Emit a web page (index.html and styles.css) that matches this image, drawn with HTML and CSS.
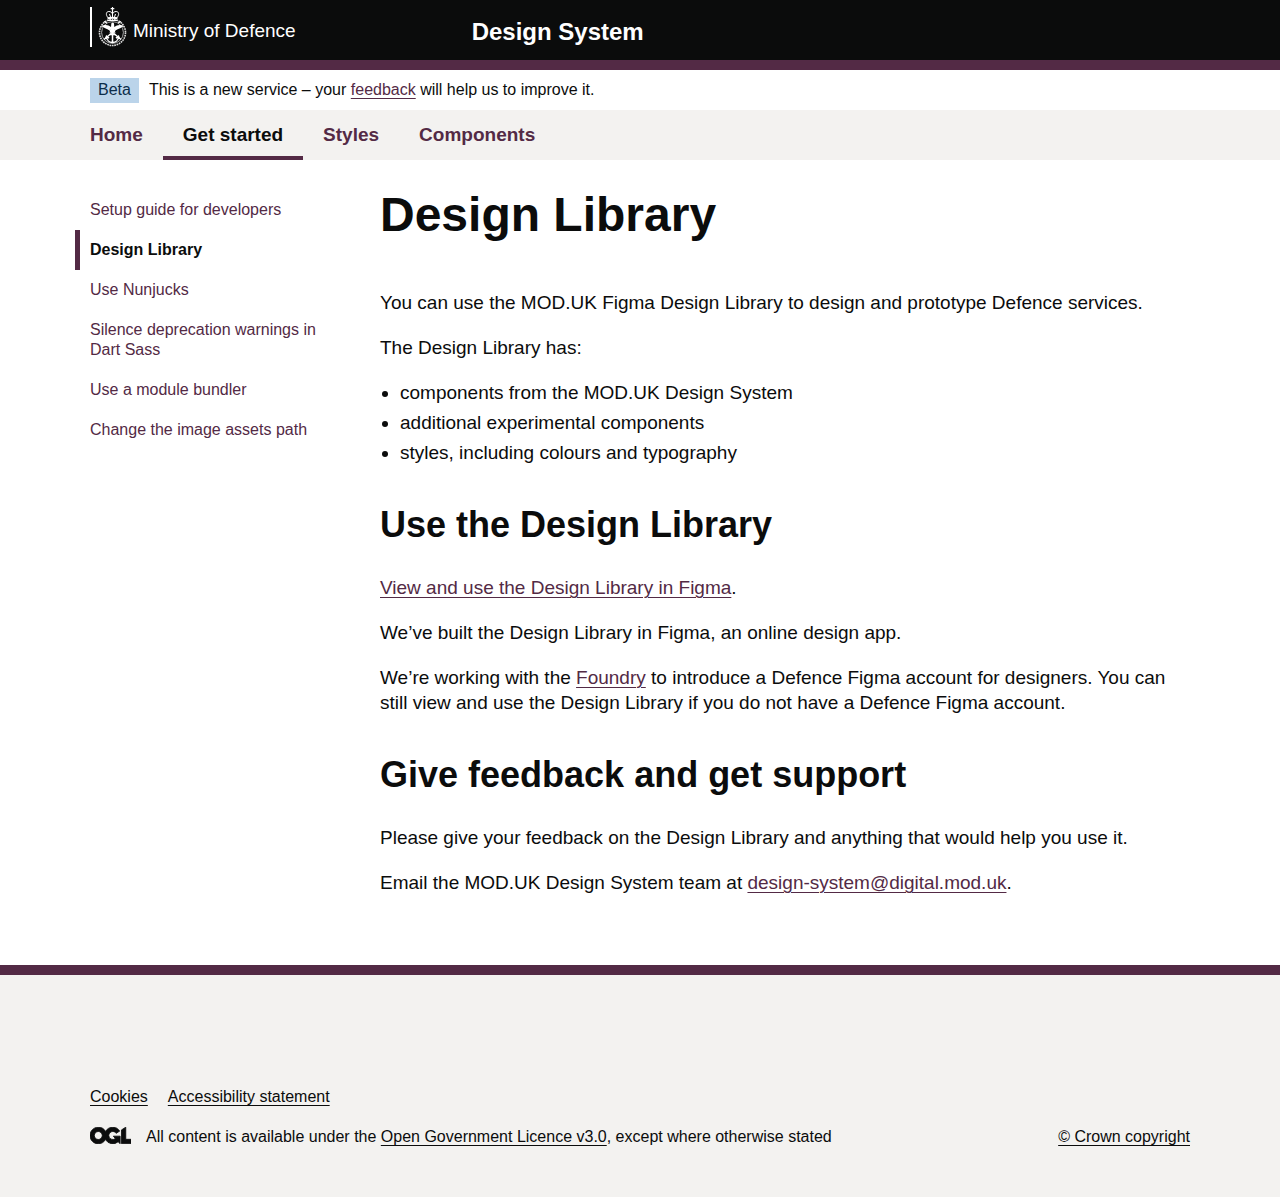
FILE: index.html
```html
<!DOCTYPE html>
<html lang="en">
<head>
<meta charset="utf-8">
<meta name="viewport" content="width=device-width, initial-scale=1">
<title>Design Library</title>
<link rel="stylesheet" href="styles.css">
</head>
<body>
<header class="header">
  <div class="container header-inner">
    <a class="logo" href="#" aria-label="Ministry of Defence">
      <svg class="crest" width="30" height="42" viewBox="0 0 30 42" fill="none" stroke="#fff" aria-hidden="true">
        <path d="M14.500 1v5M12.700 2.700h3.600" stroke-width="1.200"/>
        <path d="M10 11.500C7.500 9 8 5.500 10.800 5.500c2 0 3.200 1 3.700 2.500.5-1.500 1.700-2.500 3.700-2.500C21 5.500 21.500 9 19 11.500M14.500 6v5M11.500 8l1 3M17.500 8l-1 3" stroke-width="1"/>
        <path d="M9.500 12.300q5-1.300 10 0" stroke-width="2"/>
        <circle cx="14.500" cy="26.500" r="13" stroke-width="1.600" stroke-dasharray="1.700 .7" opacity=".85"/>
        <circle cx="14.500" cy="26.500" r="10.900" stroke-width=".8" opacity=".8"/>
        <path d="M6 15.500l3 1.500M23 15.500l-3 1.500M10 14.500h9" stroke-width="1.200"/>
        <path d="M6.500 19.500l16.500 14M22.500 19.500L6 33.500" stroke-width="1.300"/>
        <path d="M3 20.500c4-2.500 7.500-1.500 10 .5l.3-3.500c.6-1.300 2.200-1.300 2.700 0l.3 3.500c2.700-2 6-3 10-.5-2.500.3-3 1.200-4.800 2-1.600.8-3.500 1.200-5 1.300l1 3h-6l1-3c-1.600-.1-3.200-.5-4.700-1.300-1.800-.8-2.300-1.700-4.800-2z" fill="#fff" stroke="none"/>
        <path d="M14.500 26v10M11.500 28.500h6M8.500 30.500c.2 4 3.200 6 6 6s5.800-2 6-6M7.500 33l1-2.800 2.500 2M21.500 33l-1-2.800-2.500 2" stroke-width="1.500"/>
      </svg>
      <span class="logo-text">Ministry of Defence</span>
    </a>
    <a class="service-name" href="#">Design System</a>
  </div>
</header>
<div class="phase">
  <div class="container phase-inner">
    <strong class="tag">Beta</strong>
    <span>This is a new service – your <a class="link" href="#">feedback</a> will help us to improve it.</span>
  </div>
</div>
<nav class="top-nav" aria-label="Main">
  <ul class="container top-list">
    <li><a href="#">Home</a></li>
    <li><a class="current" href="#" aria-current="page">Get started</a></li>
    <li><a href="#">Styles</a></li>
    <li><a href="#">Components</a></li>
  </ul>
</nav>
<div class="page">
  <div class="container page-inner">
    <nav class="side-nav" aria-label="Get started">
      <ul>
        <li><a href="#">Setup guide for developers</a></li>
        <li class="current"><a href="#" aria-current="page">Design Library</a></li>
        <li><a href="#">Use Nunjucks</a></li>
        <li><a href="#">Silence deprecation warnings in Dart Sass</a></li>
        <li><a href="#">Use a module bundler</a></li>
        <li><a href="#">Change the image assets path</a></li>
      </ul>
    </nav>
    <main class="content">
      <h1>Design Library</h1>
      <p>You can use the MOD.UK Figma Design Library to design and prototype Defence services.</p>
      <p>The Design Library has:</p>
      <ul>
        <li>components from the MOD.UK Design System</li>
        <li>additional experimental components</li>
        <li>styles, including colours and typography</li>
      </ul>
      <h2>Use the Design Library</h2>
      <p><a class="link" href="#">View and use the Design Library in Figma</a>.</p>
      <p>We’ve built the Design Library in Figma, an online design app.</p>
      <p>We’re working with the <a class="link" href="#">Foundry</a> to introduce a Defence Figma account for designers. You can still view and use the Design Library if you do not have a Defence Figma account.</p>
      <h2>Give feedback and get support</h2>
      <p>Please give your feedback on the Design Library and anything that would help you use it.</p>
      <p>Email the MOD.UK Design System team at <a class="link" href="mailto:design-system@digital.mod.uk">design-system@digital.mod.uk</a>.</p>
    </main>
  </div>
</div>
<footer class="footer">
  <div class="container">
    <ul class="footer-links">
      <li><a href="#">Cookies</a></li>
      <li><a href="#">Accessibility statement</a></li>
    </ul>
    <div class="footer-meta">
      <svg width="41" height="17" viewBox="0 0 483.2 195.7" fill="currentColor" stroke="currentColor" stroke-width="10" aria-hidden="true">
        <path d="M421.5 142.8V.1l-50.7 32.3v161.1h112.4v-50.7zm-122.3-9.6A47.12 47.12 0 0 1 221 97.8c0-26 21.1-47.1 47.1-47.1 16.7 0 31.4 8.7 39.7 21.8l42.7-27.2A97.63 97.63 0 0 0 268.1 0c-36.5 0-68.3 20.1-85.1 49.7A98 98 0 0 0 97.8 0C43.9 0 0 43.9 0 97.8s43.9 97.8 97.8 97.8c36.5 0 68.3-20.1 85.1-49.7a97.76 97.76 0 0 0 149.6 25.4l19.4 22.2h3v-87.8h-80l24.3 27.5zM97.8 145c-26 0-47.1-21.1-47.1-47.1s21.1-47.1 47.1-47.1 47.1 21.1 47.1 47.1S123.8 145 97.8 145"/>
      </svg>
      <span class="licence">All content is available under the <a href="#">Open Government Licence v3.0</a>, except where otherwise stated</span>
      <a href="#">© Crown copyright</a>
    </div>
  </div>
</footer>
</body>
</html>
```
FILE: styles.css
```css
* { box-sizing: border-box; }
body {
  margin: 0;
  background: #f3f2f0;
  color: #0b0c0c;
  font: 16px/20px "Liberation Sans", Arial, sans-serif;
}
h1, h2, p, ul { margin: 0; padding: 0; }
a {
  color: inherit;
  text-decoration-thickness: 1px;
  text-underline-offset: 3px;
}
.link { color: #532a45; }
.container {
  width: calc(100% - 60px);
  max-width: 1100px;
  margin: 0 auto;
}

.header {
  background: #0b0c0c;
  color: #fff;
  border-bottom: 10px solid #532a45;
}
.header-inner { display: flex; height: 60px; }
.header a { text-decoration: none; }
.logo {
  display: flex;
  align-items: center;
  gap: 5px;
  width: 33.33%;
  height: 40px;
  margin-top: 7px;
  border-left: 2px solid #fff;
  padding-left: 6px;
}
.crest { flex: none; }
.logo-text { font-size: 19px; line-height: 20px; padding-top: 7px; white-space: nowrap; }
.service-name { font-size: 24px; font-weight: bold; line-height: 30px; padding: 17px 15px 0; }

.phase, .page { background: #fff; }
.phase-inner { display: flex; align-items: center; gap: 10px; min-height: 40px; }
.tag {
  background: #bbd4ea;
  color: #0c2d4a;
  font-weight: normal;
  padding: 2px 8px 3px;
  margin-top: 1px;
}

.top-list { display: flex; list-style: none; font-size: 19px; font-weight: bold; line-height: 25px; }
.top-list a {
  display: block;
  padding: 12px 20px 9px;
  border-bottom: 4px solid transparent;
  color: #532a45;
  text-decoration: none;
}
.top-list li:first-child a { padding-left: 0; }
.top-list .current { color: #0b0c0c; border-color: #532a45; }

.page { padding: 30px 0 50px; }
.page-inner {
  display: grid;
  grid-template-columns: 255px minmax(0, 1fr);
  column-gap: 35px;
}
.side-nav ul { list-style: none; }
.side-nav li { padding: 10px 15px 10px 10px; margin-left: -15px; border-left: 5px solid transparent; }
.side-nav .current { border-color: #532a45; font-weight: bold; }
.side-nav a { color: #532a45; text-decoration: none; }
.side-nav .current a { color: #0b0c0c; }

.content { font-size: 19px; line-height: 25px; }
.content h1 { font-size: 48px; line-height: 50px; margin-bottom: 50px; }
.content h2 { font-size: 36px; line-height: 40px; margin: 40px 0 30px; }
.content p { margin-bottom: 20px; }
.content ul { padding-left: 20px; margin-bottom: 20px; }
.content li + li { margin-top: 5px; }

.footer { border-top: 10px solid #532a45; padding: 112px 0 50px; }
.footer-links { display: flex; gap: 20px; list-style: none; margin-bottom: 20px; }
.footer-meta { display: flex; align-items: flex-start; gap: 15px; }
.licence { flex: 1; }
```
